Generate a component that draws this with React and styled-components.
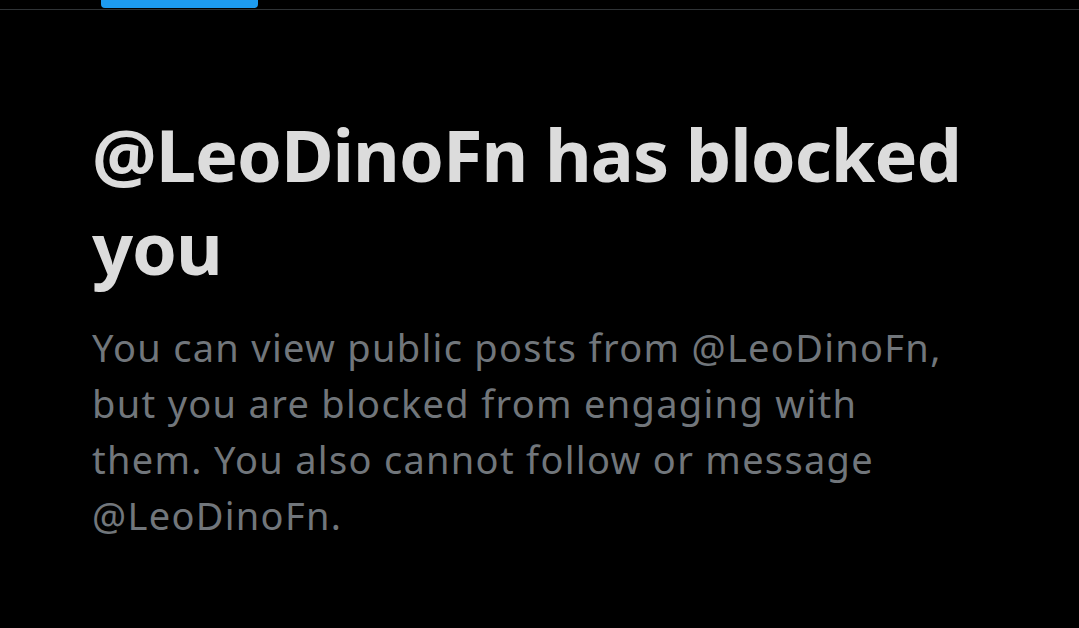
import React from 'react'
import styled, { createGlobalStyle } from 'styled-components'

const GlobalStyle = createGlobalStyle`
  html, body {
    margin: 0;
    padding: 0;
    background: #000;
  }
  body {
    font-family: 'Noto Sans', 'Open Sans', sans-serif;
  }
`

const Page = styled.div`
  width: 1079px;
  height: 628px;
  background: #000;
  overflow: hidden;
`

const TabBar = styled.div`
  height: 9px;
  border-bottom: 1px solid #2f3336;
  padding-left: 101px;
`

const Indicator = styled.div`
  width: 157px;
  height: 8px;
  background: #1d9bf0;
  border-radius: 0 0 4px 4px;
`

const Body = styled.div`
  padding: 98px 60px 0 92px;
`

const Title = styled.h1`
  margin: 0;
  font-size: 72px;
  line-height: 93px;
  font-weight: 700;
  letter-spacing: -1px;
  color: #dcdcdc;
  max-width: 900px;
`

const Text = styled.p`
  margin: 25px 0 0;
  font-size: 38px;
  line-height: 56px;
  font-weight: 400;
  letter-spacing: 1.3px;
  color: #71767b;
  max-width: 880px;
`

export default function App() {
  return (
    <Page>
      <GlobalStyle />
      <TabBar>
        <Indicator />
      </TabBar>
      <Body>
        <Title>@LeoDinoFn has blocked you</Title>
        <Text>
          You can view public posts from @LeoDinoFn, but you are blocked from
          engaging with them. You also cannot follow or message @LeoDinoFn.
        </Text>
      </Body>
    </Page>
  )
}
